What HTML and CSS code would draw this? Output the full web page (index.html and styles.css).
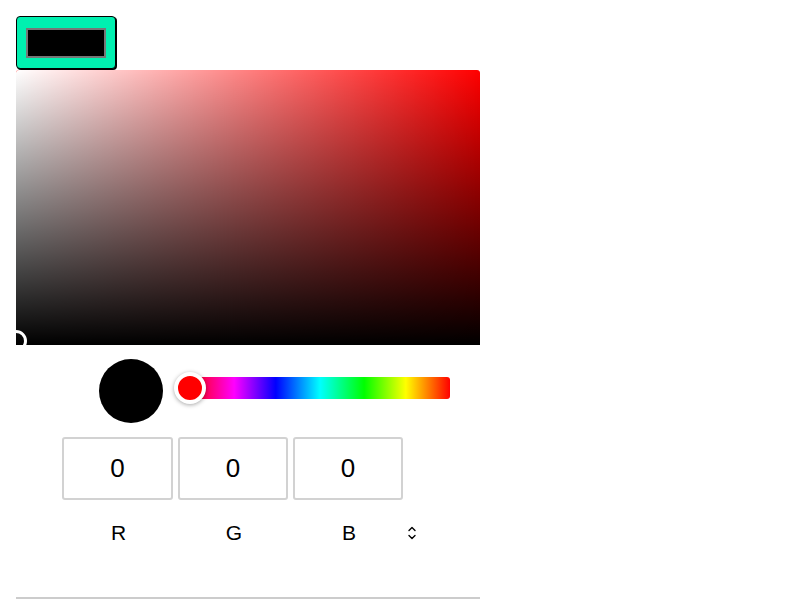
FILE: index.html
```html
<!DOCTYPE html>
<html lang="en">
<head>
<meta charset="utf-8">
<title>Color picker</title>
<link rel="stylesheet" href="styles.css">
</head>
<body>
<div class="picker">
  <button class="trigger" type="button"><span class="trigger-swatch"></span></button>
  <div class="saturation">
    <div class="sat-white"></div>
    <div class="sat-black"></div>
    <div class="sat-pointer"></div>
  </div>
  <div class="controls">
    <div class="swatch"></div>
    <div class="hue">
      <div class="hue-pointer"></div>
    </div>
  </div>
  <div class="fields">
    <input class="field" type="text" value="0">
    <input class="field" type="text" value="0">
    <input class="field" type="text" value="0">
  </div>
  <div class="labels">
    <span class="label">R</span>
    <span class="label">G</span>
    <span class="label">B</span>
    <span class="toggle">
      <svg width="12" height="16" viewBox="0 0 12 16" fill="none" stroke="#000" stroke-width="1.4" stroke-linecap="round" stroke-linejoin="round">
        <path d="M3 5.5 L6 2.5 L9 5.5"/>
        <path d="M3 10.5 L6 13.5 L9 10.5"/>
      </svg>
    </span>
  </div>
  <div class="rule"></div>
</div>
</body>
</html>
```

FILE: styles.css
```css
* { box-sizing: border-box; }

html, body {
  margin: 0;
  padding: 0;
  background: #fff;
  font-family: "Liberation Sans", Arial, sans-serif;
}

.picker {
  width: 496px;
  padding: 16px;
}

.trigger {
  display: flex;
  align-items: center;
  justify-content: center;
  width: 100px;
  height: 53px;
  margin: 0;
  padding: 1px 0 0 0;
  background: #00f0b0;
  border: 1px solid #000;
  border-radius: 4px;
  box-shadow: 1px 1px 0 #000;
  cursor: pointer;
}

.trigger-swatch {
  display: block;
  width: 80px;
  height: 30px;
  background: #000;
  border: 2px solid #777;
}

.saturation {
  position: relative;
  width: 464px;
  height: 275px;
  margin-top: 1px;
  background: #f00;
  border-radius: 3px 3px 0 0;
  overflow: hidden;
}

.sat-white,
.sat-black {
  position: absolute;
  inset: 0;
}

.sat-white {
  background: linear-gradient(to right, #fff, rgba(255, 255, 255, 0));
}

.sat-black {
  background: linear-gradient(to top, #000, rgba(0, 0, 0, 0));
}

.sat-pointer {
  position: absolute;
  left: -11px;
  top: 260px;
  width: 22px;
  height: 22px;
  border: 3px solid #fff;
  border-radius: 50%;
}

.controls {
  display: flex;
  align-items: flex-start;
  margin-top: 14px;
  padding-left: 83px;
}

.swatch {
  width: 64px;
  height: 64px;
  border-radius: 50%;
  background: #000;
  flex: none;
}

.hue {
  position: relative;
  width: 260px;
  height: 22px;
  margin-left: 27px;
  margin-top: 18px;
  border-radius: 3px;
  background: linear-gradient(to right, #f00 0%, #f0f 17%, #00f 33%, #0ff 50%, #0f0 67%, #ff0 83%, #f00 100%);
}

.hue-pointer {
  position: absolute;
  left: -16px;
  top: -5px;
  width: 32px;
  height: 32px;
  border-radius: 50%;
  background: #f00;
  border: 4px solid #fff;
  box-shadow: 0 1px 4px rgba(0, 0, 0, 0.35);
}

.fields {
  display: grid;
  grid-template-columns: 111px 110px 110px;
  column-gap: 5px;
  margin-top: 14px;
  padding-left: 46px;
}

.field {
  width: 100%;
  height: 63px;
  margin: 0;
  padding: 0;
  border: 2px solid #d2d2d2;
  border-radius: 3px;
  background: #fff;
  color: #000;
  font-family: "Liberation Sans", Arial, sans-serif;
  font-size: 26px;
  text-align: center;
  outline: none;
}

.labels {
  display: grid;
  grid-template-columns: 111px 110px 110px 16px;
  column-gap: 5px;
  align-items: center;
  height: 24px;
  margin-top: 21px;
  padding-left: 47px;
}

.label {
  text-align: center;
  font-size: 21px;
  line-height: 24px;
  color: #000;
}

.toggle {
  display: flex;
  align-items: center;
  margin-left: -3px;
}

.rule {
  width: 464px;
  height: 2px;
  margin-top: 52px;
  background: #ccc;
}
```
